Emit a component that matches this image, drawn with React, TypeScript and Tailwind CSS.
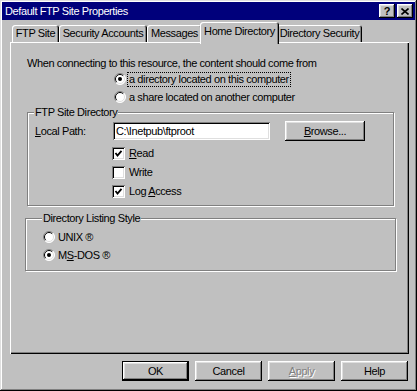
import type { ReactNode } from "react";

const raised =
  "shadow-[inset_-1px_-1px_0_#000,inset_1px_1px_0_#fff,inset_-2px_-2px_0_#808080,inset_2px_2px_0_#dfdfdf]";
const sunken =
  "shadow-[inset_1px_1px_0_#808080,inset_-1px_-1px_0_#fff,inset_2px_2px_0_#000,inset_-2px_-2px_0_#dfdfdf]";

export default function App() {
  return (
    <div className="h-[391px] w-[417px] bg-[#c0c0c0] p-[2px] font-['Liberation_Sans',Arial,sans-serif] text-[11px] leading-[13px] tracking-[-0.4px] text-black shadow-[inset_-1px_-1px_0_#000,inset_1px_1px_0_#dfdfdf,inset_-2px_-2px_0_#808080,inset_2px_2px_0_#fff]">
      {/* Title bar */}
      <div className="flex h-[18px] items-center justify-between bg-[#00007b] pl-[3px] pr-[2px]">
        <span className="text-white">Default FTP Site Properties</span>
        <div className="flex gap-[2px]">
          <CaptionButton>
            <span className="text-[11px] font-bold leading-none">?</span>
          </CaptionButton>
          <CaptionButton>
            <svg width="8" height="7" viewBox="0 0 8 7">
              <path d="M0.5 0.5 L7.5 6.5 M7.5 0.5 L0.5 6.5" stroke="#000" strokeWidth="1.6" />
            </svg>
          </CaptionButton>
        </div>
      </div>

      <div className="pl-[8px] pr-[6px] pt-[2px]">
        {/* Tabs */}
        <div className="flex h-[20px] items-end pl-[2px]">
          <Tab w="w-[47px]">FTP Site</Tab>
          <Tab w="w-[88px]">Security Accounts</Tab>
          <Tab w="w-[55px]">Messages</Tab>
          <Tab w="w-[79px]" active>
            Home Directory
          </Tab>
          <Tab w="w-[85px]">Directory Security</Tab>
        </div>

        {/* Panel */}
        <div className="h-[312px] pl-[17px] pr-[15px] pt-[15px] shadow-[inset_1px_1px_0_#fff,inset_-1px_-1px_0_#000,inset_-2px_-2px_0_#808080]">
          <p>When connecting to this resource, the content should come from</p>
          <div className="ml-[87px]">
            <div className="flex h-[18px] items-center gap-[1px]">
              <Radio checked />
              <span className="border border-dotted border-black px-[1px]">
                a directory located on this computer
              </span>
            </div>
            <div className="flex h-[18px] items-center gap-[1px]">
              <Radio />
              <span className="border border-transparent px-[1px]">
                a share located on another computer
              </span>
            </div>
          </div>

          <Group label="FTP Site Directory" className="pb-[4px] pl-[7px]">
            <div className="mt-[2px] flex h-[20px] items-center">
              <span className="w-[78px]">
                <u>L</u>ocal Path:
              </span>
              <div className={`flex h-[18px] w-[157px] items-center bg-white pl-[3px] ${sunken}`}>
                C:\Inetpub\ftproot
              </div>
              <button
                className={`ml-[15px] flex h-[20px] w-[80px] items-center justify-center bg-[#c0c0c0] ${raised}`}
              >
                <span>
                  <u>B</u>rowse...
                </span>
              </button>
            </div>
            <div className="ml-[77px] mt-[3px]">
              <Check checked>
                <u>R</u>ead
              </Check>
              <Check>Write</Check>
              <Check checked>
                Log <u>A</u>ccess
              </Check>
            </div>
          </Group>

          <Group
            label="Directory Listing Style"
            className="-ml-[2px] -mr-[2px] mt-[6px] pb-[6px] pl-[17px] pt-[3px]"
          >
            <div className="flex h-[18px] items-center gap-[3px]">
              <Radio />
              <span>UNIX ®</span>
            </div>
            <div className="flex h-[18px] items-center gap-[3px]">
              <Radio checked />
              <span>
                M<u>S</u>-DOS ®
              </span>
            </div>
          </Group>
        </div>

        {/* Buttons */}
        <div className="mt-[7px] flex justify-end gap-[6px] pr-[1px]">
          <button className={`flex h-[20px] w-[67px] items-center justify-center border border-black bg-[#c0c0c0] ${raised}`}>
            OK
          </button>
          <button className={`flex h-[20px] w-[67px] items-center justify-center bg-[#c0c0c0] ${raised}`}>
            Cancel
          </button>
          <button
            className={`flex h-[20px] w-[67px] items-center justify-center bg-[#c0c0c0] text-[#808080] [text-shadow:1px_1px_0_#fff] ${raised}`}
          >
            <span>
              <u>A</u>pply
            </span>
          </button>
          <button className={`flex h-[20px] w-[67px] items-center justify-center bg-[#c0c0c0] ${raised}`}>
            Help
          </button>
        </div>
      </div>
    </div>
  );
}

function CaptionButton({ children }: { children: ReactNode }) {
  return (
    <div
      className={`flex h-[14px] w-[16px] items-center justify-center bg-[#c0c0c0] ${raised}`}
    >
      {children}
    </div>
  );
}

function Tab({
  children,
  w,
  active,
}: {
  children: ReactNode;
  w: string;
  active?: boolean;
}) {
  const edge =
    "rounded-t-[3px] shadow-[inset_1px_1px_0_#fff,inset_-1px_0_0_#000,inset_-2px_0_0_#808080]";
  if (active) {
    return (
      <div
        className={`relative z-10 -mx-[2px] -mb-[2px] flex h-[22px] shrink-0 items-center justify-center bg-[#c0c0c0] pb-[3px] ${w} ${edge}`}
      >
        {children}
      </div>
    );
  }
  return (
    <div className={`flex h-[17px] shrink-0 items-center justify-center ${w} ${edge}`}>
      {children}
    </div>
  );
}

function Group({
  label,
  className,
  children,
}: {
  label: string;
  className?: string;
  children: ReactNode;
}) {
  return (
    <fieldset
      className={`border border-[#808080] shadow-[inset_1px_1px_0_#fff,1px_1px_0_#fff] ${className ?? ""}`}
    >
      <legend className="ml-[-1px] bg-[#c0c0c0] px-[1px]">{label}</legend>
      {children}
    </fieldset>
  );
}

function Radio({ checked }: { checked?: boolean }) {
  return (
    <svg width="12" height="12" viewBox="0 0 12 12" className="shrink-0">
      <circle cx="6" cy="6" r="5.5" fill="#fff" />
      <path d="M2.1 9.9 A5.5 5.5 0 0 1 9.9 2.1" fill="none" stroke="#808080" />
      <path d="M9.9 2.1 A5.5 5.5 0 0 1 2.1 9.9" fill="none" stroke="#fff" />
      <path d="M2.8 9.2 A4.5 4.5 0 0 1 9.2 2.8" fill="none" stroke="#000" />
      <path d="M9.2 2.8 A4.5 4.5 0 0 1 2.8 9.2" fill="none" stroke="#dfdfdf" />
      {checked && <circle cx="6" cy="6" r="2" fill="#000" />}
    </svg>
  );
}

function Check({ checked, children }: { checked?: boolean; children: ReactNode }) {
  return (
    <div className="flex h-[19px] items-center gap-[4px]">
      <div className={`flex h-[13px] w-[13px] shrink-0 items-center justify-center bg-white ${sunken}`}>
        {checked && (
          <svg width="9" height="9" viewBox="0 0 9 9">
            <path d="M1.5 4 L3.5 6.5 L7.5 1.8" fill="none" stroke="#000" strokeWidth="1.8" />
          </svg>
        )}
      </div>
      <span>{children}</span>
    </div>
  );
}
